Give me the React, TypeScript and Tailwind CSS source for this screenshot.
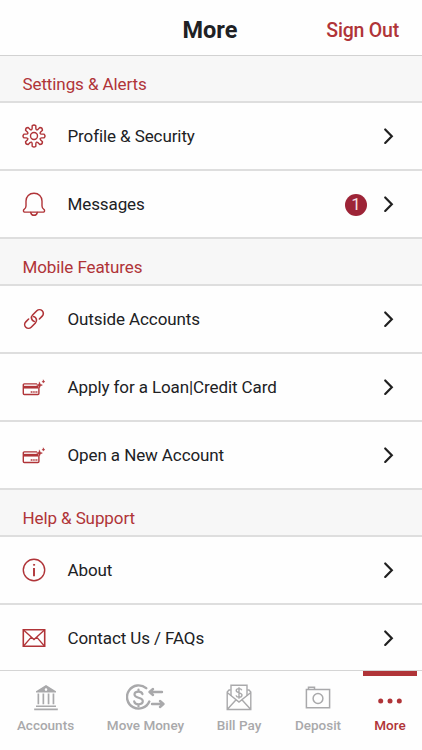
import type { ReactNode } from "react";

const RED = "#b03438";

function gearPath() {
  let d = "";
  for (let i = 0; i < 8; i++) {
    const a = (i * Math.PI) / 4;
    const at = (r: number, off: number) =>
      `${(12 + r * Math.sin(a + off)).toFixed(2)} ${(12 - r * Math.cos(a + off)).toFixed(2)}`;
    d += `${i === 0 ? "M" : "L"}${at(7.8, -0.24)}L${at(10.3, -0.18)}Q${at(11.9, 0)} ${at(10.3, 0.18)}L${at(7.8, 0.24)}Q${at(5.7, Math.PI / 8)} ${at(7.8, Math.PI / 4 - 0.24)}`;
  }
  return d + "Z";
}

function Icon({ children }: { children: ReactNode }) {
  return (
    <svg width="24" height="24" viewBox="0 0 24 24" fill="none" stroke={RED} strokeWidth="1.4" strokeLinecap="round" strokeLinejoin="round">
      {children}
    </svg>
  );
}

const gear = (
  <Icon>
    <path d={gearPath()} />
    <circle cx="12" cy="12" r="3.5" />
  </Icon>
);
const bell = (
  <Icon>
    <path d="M2.4 20.1c-1-.3-1.3-1.7-.5-2.5 1.6-1 2.1-2 2.1-3.6V9.1C4 4.500 7.200 1.300 12 1.300s8 3.200 8 7.800V14c0 1.600.5 2.600 2.100 3.600.8.8.5 2.200-.5 2.500Z" />
    <path d="M8.700 20.500c.4 1.900 1.600 2.800 3.300 2.800s2.900-.9 3.300-2.800" />
  </Icon>
);
const link = (
  <Icon>
    <g transform="rotate(-45 12 12)" strokeWidth="1.600">
      <path d="M15.800 15.800h4a3.800 3.800 0 0 0 0-7.600h-6a3.800 3.800 0 0 0-3.300 5.700" />
      <path d="M8.200 8.200h-4a3.800 3.800 0 0 0 0 7.600h6a3.800 3.800 0 0 0 3.300-5.700" />
    </g>
  </Icon>
);
const card = (
  <Icon>
    <path d="M14.600 8.900H2.300c-.7 0-1 .4-1 1v8.600c0 .6.400 1 1 1h13.600c.6 0 1-.4 1-1v-5.700" />
    <path d="M1.300 12.200h15" strokeWidth="2.700" strokeLinecap="butt" />
    <path d="M8.700 17h6.700" strokeWidth="1.600" strokeDasharray="1.300 .5" strokeLinecap="butt" />
    <path d="M17.500 7.200l.8 2.100 2.100.8-2.100.8-.8 2.100-.8-2.100-2.100-.8 2.100-.8ZM21.400 5.100l.4 1.100 1.100.4-1.100.4-.4 1.100-.4-1.100-1.100-.4 1.100-.4Z" fill={RED} strokeWidth=".5" />
  </Icon>
);
const info = (
  <Icon>
    <circle cx="12" cy="12" r="10.700" />
    <path d="M12 10v8.200" strokeWidth="1.900" strokeLinecap="butt" />
    <circle cx="12" cy="6.800" r=".6" fill={RED} strokeWidth=".9" />
  </Icon>
);
const mail = (
  <Icon>
    <g strokeLinejoin="miter">
      <path d="M1.300 3.700h21.400v16.600H1.300Z" strokeWidth="1.600" />
      <path d="M1.600 4 12 13.500 22.400 4M1.600 20l7.700-8.900M22.400 20l-7.700-8.900" strokeWidth="1.300" />
    </g>
  </Icon>
);

function Section({ title }: { title: string }) {
  return (
    <div className="flex h-[47px] shrink-0 items-center border-b-2 border-[#dedede] bg-[#f7f7f7] pt-[11px] pl-[22.500px] text-[17px] tracking-[-0.1px] text-[#b03438]">
      <span className="leading-5">{title}</span>
    </div>
  );
}

function Row({ icon, label, badge, last }: { icon: ReactNode; label: string; badge?: string; last?: boolean }) {
  return (
    <div className={`flex shrink-0 items-center pr-[26px] pl-[22px] ${last ? "h-[67px] pb-px" : "h-[68px] border-b-2 border-[#dedede]"}`}>
      {icon}
      <span className="ml-[21.500px] flex-1 text-[17px] leading-6 tracking-[-0.1px] text-[#202124]">{label}</span>
      {badge && (
        <span className="mt-[2px] mr-[13px] flex size-[22px] items-center justify-center rounded-full bg-[#9d2437] text-[17px] text-[#f5dfe1]">
          {badge}
        </span>
      )}
      <svg width="16" height="18" viewBox="0 0 16 18" fill="none" stroke="#202020" strokeWidth="2.200" strokeLinecap="round">
        <path d="m5.200 2.500 6.600 6.700-6.600 6.700" />
      </svg>
    </div>
  );
}

const GRAY = "#a9a9ab";
const bank = (
  <svg width="26" height="28" viewBox="0 0 26 28" fill={GRAY}>
    <path fillRule="evenodd" d="M13 1 23 7.200V8.400H3V7.200ZM13 4.300a1.300 1.300 0 1 0 0 2.600 1.300 1.300 0 0 0 0-2.600Z" />
    <path d="M4.500 9.500h1.700v10.700h-1.700zM9.500 9.500h1.700v10.700h-1.700zM14.700 9.500h1.700v10.700h-1.700zM19.600 9.500h1.700v10.700h-1.700zM3 21.400h20v1.500H3zM1.200 24.500h23.600v1.700H1.200z" />
  </svg>
);
const money = (
  <svg width="40" height="28" viewBox="0 0 40 28" fill="none" stroke={GRAY} strokeWidth="2.400" strokeLinecap="round" strokeLinejoin="round">
    <path d="M20.200 4.200A11.600 11.600 0 1 0 23.300 17.500" />
    <path d="M16.500 10.100c-.5-1.600-1.900-2.500-4-2.500-2.400 0-4 1.200-4 3 0 4.200 8.300 2.100 8.300 6.500 0 2-1.700 3.200-4.200 3.200-2.400 0-4-1.100-4.400-2.900M12.500 5.500v2M12.500 20.500v2" strokeWidth="2.200" />
    <path d="M36 8H23.500m3.500-3-3.500 3 3.500 3M26 20H37.500m-3.500-3 3.500 3-3.500 3" />
  </svg>
);
const bill = (
  <svg width="28" height="28" viewBox="0 0 28 28" fill="none" stroke={GRAY} strokeWidth="1.400">
    <path d="M5.700 6H4L2.200 8v17.500h23.600V8L24 6h-1.700M2.200 8.500 14 18 25.800 8.500M2.200 25.500l8.900-9.800M25.800 25.500l-8.900-9.800" />
    <path d="M6 12V1.300h16V12" />
    <path d="M16.800 6.200c-.4-1-1.400-1.600-2.800-1.600-1.700 0-2.800.8-2.800 2 0 2.900 5.800 1.500 5.800 4.500 0 1.300-1.200 2.200-3 2.200-1.600 0-2.700-.7-3-1.900M14 3.200v11.500" />
  </svg>
);
const camera = (
  <svg width="28" height="28" viewBox="0 0 28 28" fill="none" stroke={GRAY} strokeWidth="1.500">
    <path d="M2.400 5.500h23.200v18.200H2.400Z" />
    <path d="M4.500 5.500V3.300h6v2.200" />
    <circle cx="14" cy="14.500" r="4.900" />
  </svg>
);
const dots = (
  <svg width="28" height="28" viewBox="0 0 28 28" fill={RED}>
    <circle cx="4.700" cy="17" r="2.500" />
    <circle cx="14" cy="17" r="2.500" />
    <circle cx="23.300" cy="17" r="2.500" />
  </svg>
);

function Tab({ icon, label, width, active }: { icon: ReactNode; label: string; width: string; active?: boolean }) {
  return (
    <div className={`flex h-full shrink-0 flex-col items-center whitespace-nowrap text-[13.500px] font-medium ${width} ${active ? "border-t-[5px] border-[#b03438] pt-2 text-[#b03438]" : "pt-[13px] text-[#a9a9ab]"}`}>
      {icon}
      <span className="mt-[3px] leading-5">{label}</span>
    </div>
  );
}

export default function App() {
  return (
    <div className="flex h-[750px] w-[422px] flex-col overflow-hidden bg-[#fefefe] font-[Roboto,sans-serif]">
      <header className="grid h-14 shrink-0 grid-cols-[1fr_auto_1fr] items-center border-b border-[#d2d2d2] pt-[6px] pr-[23px] pl-[21px] text-[#202124]">
        <span />
        <h1 className="text-[23.500px] font-bold">More</h1>
        <span className="text-right text-[19.500px] font-medium tracking-[-0.2px] text-[#b03438]">Sign Out</span>
      </header>
      <div className="flex h-[614px] shrink-0 flex-col overflow-hidden">
        <Section title="Settings & Alerts" />
        <Row icon={gear} label="Profile & Security" />
        <Row icon={bell} label="Messages" badge="1" />
        <Section title="Mobile Features" />
        <Row icon={link} label="Outside Accounts" />
        <Row icon={card} label="Apply for a Loan|Credit Card" />
        <Row icon={card} label="Open a New Account" />
        <Section title="Help & Support" />
        <Row icon={info} label="About" />
        <Row icon={mail} label="Contact Us / FAQs" last />
      </div>
      <nav className="flex h-20 shrink-0 border-t border-[#d5d5d5]">
        <Tab icon={bank} label="Accounts" width="w-[91px]" />
        <Tab icon={money} label="Move Money" width="w-[109px]" />
        <Tab icon={bill} label="Bill Pay" width="w-[78px]" />
        <Tab icon={camera} label="Deposit" width="mr-[5px] w-20" />
        <Tab icon={dots} label="More" width="w-[54px]" active />
      </nav>
    </div>
  );
}
